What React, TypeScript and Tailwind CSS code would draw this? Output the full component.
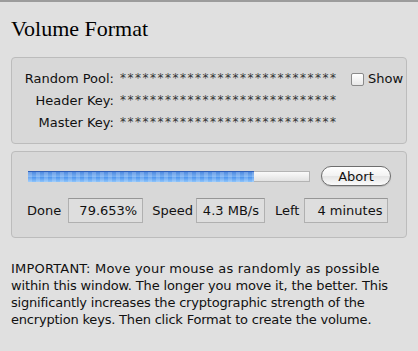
import React from "react";

const sans = "font-['DejaVu_Sans',sans-serif]";

const KeyRow = ({ label, children }: { label: string; children?: React.ReactNode }) => (
  <div className="flex items-center h-[22px]">
    <div className="w-[102px] text-right">{label}</div>
    <div className="ml-[6px] w-[217px] tracking-[1.5px] text-[12px] leading-none pb-[2px] text-[#333] overflow-hidden whitespace-nowrap">
      *****************************
    </div>
    {children}
  </div>
);

const Field = ({ value, width }: { value: string; width: string }) => (
  <div
    className={`${width} h-[25px] flex items-center justify-end pr-[5px] bg-[#dedede] border border-[#b0b0b0] border-t-[#969696]`}
  >
    {value}
  </div>
);

export default function App() {
  return (
    <div className={`w-[418px] h-[351px] bg-[#e0e0e0] border-t-2 border-[#9c9c9c] text-[13px] text-[#111] ${sans}`}>
      <h1 className="pl-[11px] pt-[14px] h-[55px] text-[22px] leading-[26px] font-['Liberation_Serif',serif] text-black">
        Volume Format
      </h1>

      <div className="mx-[11px] h-[87px] pt-[10px] rounded-[4px] bg-[#d8d8d8] border border-[#bcbcbc]">
        <KeyRow label="Random Pool:">
          <label className="ml-[14px] flex items-center gap-[4px]">
            <span className="w-[13px] h-[13px] rounded-[2px] border border-[#8a8a8a] bg-gradient-to-b from-white to-[#e8e8e8]" />
            Show
          </label>
        </KeyRow>
        <KeyRow label="Header Key:" />
        <KeyRow label="Master Key:" />
      </div>

      <div className="mx-[11px] mt-[7px] h-[87px] pt-[14px] rounded-[4px] bg-[#d8d8d8] border border-[#bcbcbc]">
        <div className="flex items-center h-[20px] pl-[16px]">
          <div className="relative w-[282px] h-[11px] border border-[#b4b4b4] bg-[linear-gradient(#fafafa,#e2e2e2)]">
            <div className="absolute -inset-[1px] w-[226px] border-t border-[#2f5fb8] bg-[repeating-linear-gradient(90deg,rgba(255,255,255,0.18)_0_4px,rgba(0,0,0,0)_4px_8px),linear-gradient(#4f8ae0,#78b2f4_50%,#4d94ee_51%,#8ec4fa)]" />
          </div>
          <button className="ml-[11px] w-[70px] h-[20px] rounded-full border border-[#6e6e6e] bg-[linear-gradient(#ffffff,#f2f2f2_50%,#e4e4e4_51%,#fbfbfb)] text-[13px] leading-none shadow-[0_1px_1px_rgba(0,0,0,0.15)]">
            Abort
          </button>
        </div>
        <div className="flex items-center mt-[12px] pl-[15px]">
          <span>Done</span>
          <div className="ml-[7px]">
            <Field value="79.653%" width="w-[75px]" />
          </div>
          <span className="ml-[9px]">Speed</span>
          <div className="ml-[3px]">
            <Field value="4.3 MB/s" width="w-[69px]" />
          </div>
          <span className="ml-[10px]">Left</span>
          <div className="ml-[5px]">
            <Field value="4 minutes" width="w-[84px]" />
          </div>
        </div>
      </div>

      <p className="px-[11px] mt-[22px] leading-[17px] whitespace-nowrap">
        <span className="block tracking-[0.2px]">IMPORTANT: Move your mouse as randomly as possible</span>
        <span className="block tracking-[-0.15px]">within this window. The longer you move it, the better. This</span>
        <span className="block tracking-[-0.2px]">significantly increases the cryptographic strength of the</span>
        <span className="block tracking-[-0.2px]">encryption keys. Then click Format to create the volume.</span>
      </p>
    </div>
  );
}
